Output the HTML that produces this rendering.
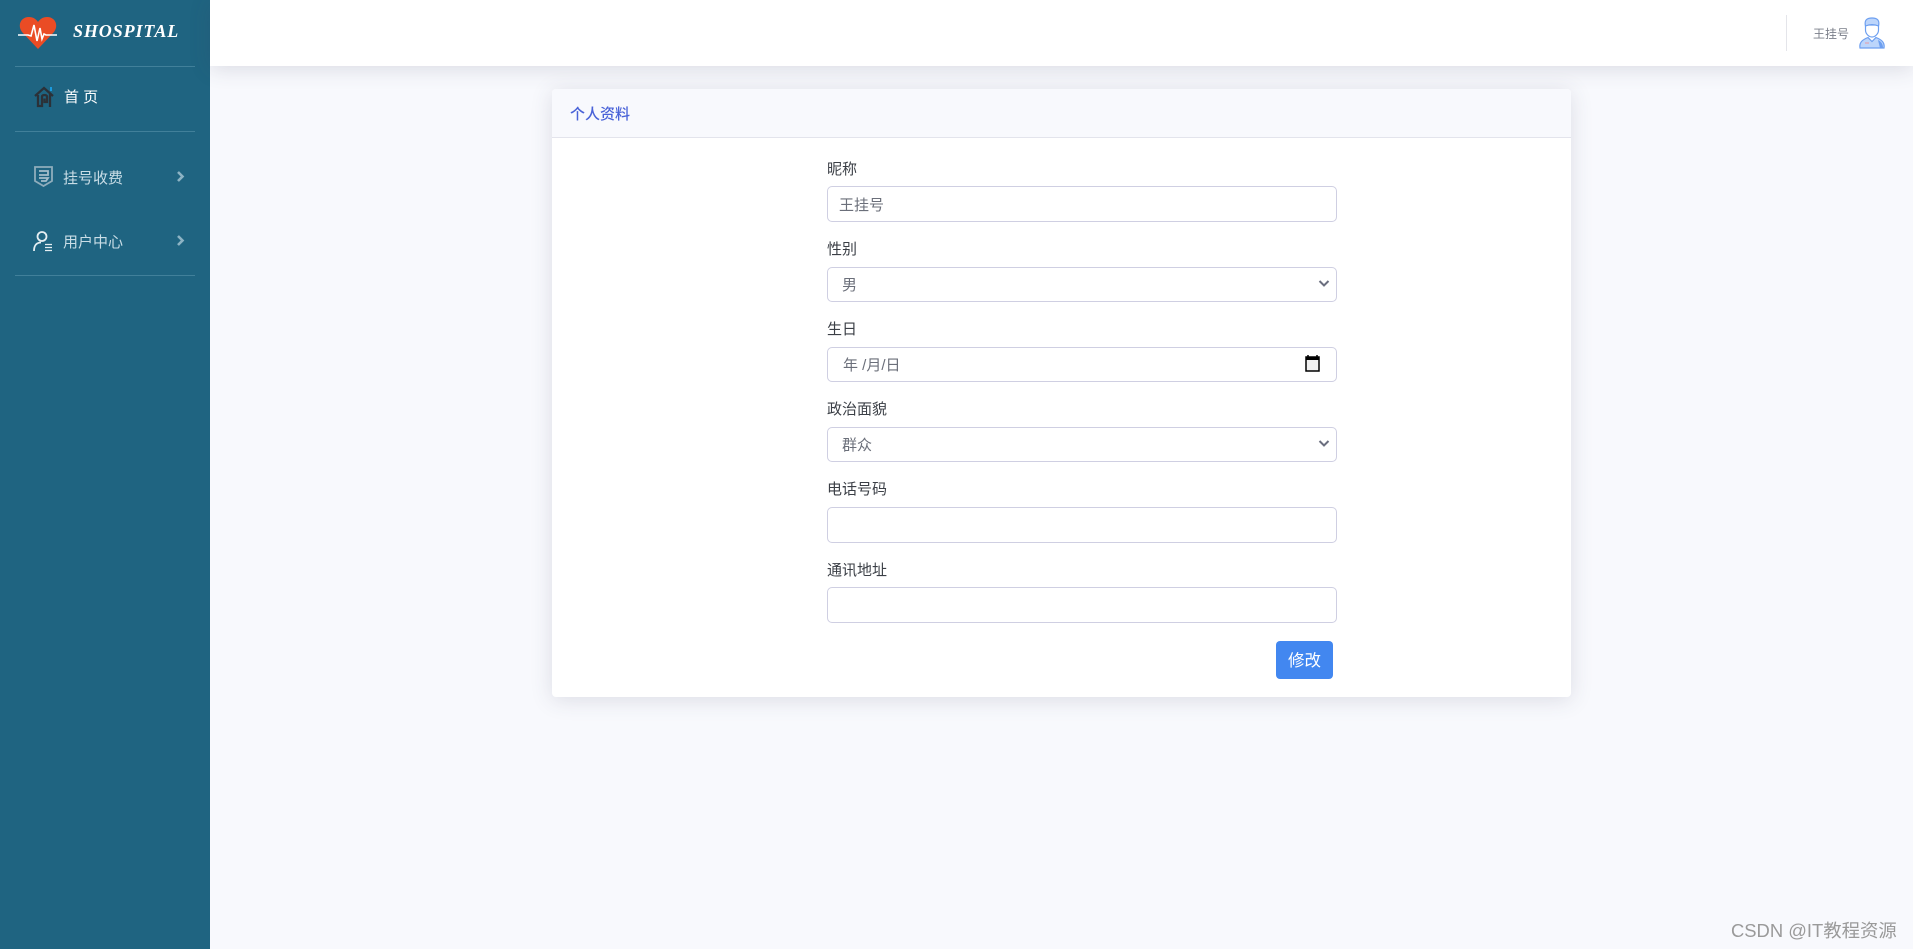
<!DOCTYPE html>
<html lang="zh"><head><meta charset="utf-8"><title>个人资料</title>
<style>
*{box-sizing:border-box}
html,body{margin:0;padding:0;width:1913px;height:949px;overflow:hidden;background:#f8f9fd;font-family:"Liberation Sans","Noto Sans CJK SC",sans-serif}
.abs,.t{position:absolute}
.t{white-space:nowrap;line-height:20px}
#side{position:absolute;left:0;top:0;width:210px;height:949px;background:#1f6481}
#top{position:absolute;left:210px;top:0;width:1703px;height:66px;background:#fff;box-shadow:0 3px 20px rgba(60,60,90,.16)}
.hr{position:absolute;left:15px;width:180px;height:1px;background:#41809a}
.m{font-size:15px;color:#c9dde6}
#card{position:absolute;left:552px;top:89px;width:1019px;height:608px;background:#fff;border-radius:4px;box-shadow:0 3px 22px rgba(60,60,90,.15)}
#ch{position:absolute;left:0;top:0;width:1019px;height:49px;background:#f8f9fd;border-bottom:1px solid #e3e4ec;border-radius:4px 4px 0 0}
.l{font-size:15px;color:#3b3f46;left:827px}
.f{position:absolute;left:827px;width:510px;background:#fff;border:1px solid #cfcfe2;border-radius:5px}
.v{font-size:15px;color:#6b6f7a}
</style></head><body>
<div id="side">
<svg class="abs" style="left:18px;top:16px" width="40" height="34" viewBox="0 0 40 34"><path d="M20 33 L4 16 C-1 9 3 1 11 1 C15 1 18 3 20 6 C22 3 25 1 29 1 C37 1 41 9 36 16Z" fill="#ea4c25"/><path d="M0 19H10L13 20L16 9L19 25L22 12L24 23L26 18L28 19H39" fill="none" stroke="#fff" stroke-width="1.600"/></svg>
<div class="t" style="left:73px;top:21px;font:italic bold 18px/20px 'Liberation Serif',serif;color:#fff;letter-spacing:.9px">SHOSPITAL</div>
<div class="hr" style="top:66px"></div>
<svg class="abs" style="left:33px;top:86px" width="22" height="22" viewBox="0 0 22 22"><path d="M2 10L11 2L20 10M5 9V20H9V10.500C9 8.500 14 8.500 14 10.500V16H11.500V12.500M17 7V21" fill="none" stroke="#2b3138" stroke-width="2.300"/><path d="M18 1V5" stroke="#1a9be0" stroke-width="2"/></svg>
<div class="t" style="left:64px;top:88px;font-size:15px;color:#fff">首 页</div>
<div class="hr" style="top:131px"></div>
<svg class="abs" style="left:34px;top:166px" width="19" height="21" viewBox="0 0 19 21"><path d="M1 1H18V15L9.500 20L1 15Z" fill="none" stroke="#8fadbc" stroke-width="1.800"/><path d="M5 5H14V9H5M5 12H14L12 15H7" fill="none" stroke="#a3bdca" stroke-width="1.800"/></svg>
<div class="t m" style="left:63px;top:169px">挂号收费</div>
<svg class="abs" style="left:176px;top:170px" width="9" height="13" viewBox="0 0 9 13"><path d="M2 2L6.500 6.500L2 11" fill="none" stroke="#8db3c4" stroke-width="2.600"/></svg>
<svg class="abs" style="left:33px;top:230px" width="20" height="22" viewBox="0 0 20 22"><circle cx="9" cy="6.500" r="4.500" fill="none" stroke="#e4eef2" stroke-width="1.800"/><path d="M1 21C1 15 4 12.500 8 12.500" fill="none" stroke="#e4eef2" stroke-width="1.800"/><path d="M12 14.500H19M12 17.500H19M12 20.500H19" stroke="#e4eef2" stroke-width="1.300"/></svg>
<div class="t m" style="left:63px;top:233px">用户中心</div>
<svg class="abs" style="left:176px;top:234px" width="9" height="13" viewBox="0 0 9 13"><path d="M2 2L6.500 6.500L2 11" fill="none" stroke="#8db3c4" stroke-width="2.600"/></svg>
<div class="hr" style="top:275px"></div>
</div>
<div id="top"></div>
<div class="abs" style="left:1786px;top:15px;width:1px;height:36px;background:#e4e5ea"></div>
<div class="t" style="left:1813px;top:24px;font-size:12px;line-height:20px;color:#7b7f8a">王挂号</div>
<svg class="abs" style="left:1859px;top:17px" width="26" height="32" viewBox="0 0 26 32"><path d="M6.500 8V13C6.500 17 10 20 13 20C16 20 19.500 17 19.500 13V8Z" fill="#fff" stroke="#6d9ff0" stroke-width="1.200"/><path d="M6.500 9C5 3 8 1 13 1C18 1 21 3 19.500 9C15 7 11 7 6.500 9Z" fill="#bcd5fb" stroke="#6d9ff0" stroke-width="1.200"/><path d="M1 31C0 25 4 22.500 9 20.500L13 24.500L17 20.500C22 22.500 26 25 25 31Z" fill="#bcd5fb" stroke="#6d9ff0" stroke-width="1.200"/><path d="M19 23C23 25 24 28 24 31H21Z" fill="#6d9ff0"/><path d="M6 26H10" stroke="#e99aa5"/></svg>
<div id="card"><div id="ch"></div></div>
<div class="t" style="left:570px;top:105px;font-size:15px;font-weight:500;color:#4a63d8">个人资料</div>
<div class="t l" style="top:160px">昵称</div>
<div class="f" style="top:186px;height:36px"></div>
<div class="t v" style="left:839px;top:196px">王挂号</div>
<div class="t l" style="top:240px">性别</div>
<div class="f" style="top:267px;height:35px"></div>
<div class="t v" style="left:842px;top:276px">男</div>
<svg class="abs" style="left:1318px;top:279px" width="12" height="9" viewBox="0 0 12 9"><path d="M1.500 2L6 6.500L10.500 2" fill="none" stroke="#6b6f7f" stroke-width="2"/></svg>
<div class="t l" style="top:320px">生日</div>
<div class="f" style="top:347px;height:35px"></div>
<div class="t v" style="left:843px;top:356px">年 /月/日</div>
<svg class="abs" style="left:1305px;top:355px" width="15" height="17" viewBox="0 0 15 17"><path d="M3 0V3M12 0V3" stroke="#000" stroke-width="1.500"/><rect x="1" y="2" width="13" height="14" fill="#f1f1f1" stroke="#000" stroke-width="1.500"/><rect x="1" y="2" width="13" height="3" fill="#000"/></svg>
<div class="t l" style="top:400px">政治面貌</div>
<div class="f" style="top:427px;height:35px"></div>
<div class="t v" style="left:842px;top:436px">群众</div>
<svg class="abs" style="left:1318px;top:439px" width="12" height="9" viewBox="0 0 12 9"><path d="M1.500 2L6 6.500L10.500 2" fill="none" stroke="#6b6f7f" stroke-width="2"/></svg>
<div class="t l" style="top:480px">电话号码</div>
<div class="f" style="top:507px;height:36px"></div>
<div class="t l" style="top:561px">通讯地址</div>
<div class="f" style="top:587px;height:36px"></div>
<div class="abs" style="left:1276px;top:641px;width:57px;height:38px;background:#4287f0;border-radius:4px;color:#fff;font-size:16.500px;line-height:41px;text-align:center">修改</div>
<div class="t" style="left:1731px;top:920px;font-size:18.400px;line-height:22px;color:#9a9a9a">CSDN @IT教程资源</div>
</body></html>
